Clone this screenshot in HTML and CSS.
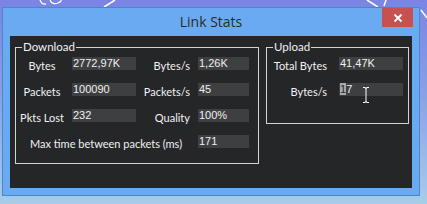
FILE: index.html
```html
<!DOCTYPE html>
<html lang="en">
<head>
    <meta charset="UTF-8">
    <title>Link Stats</title>
    <link rel="stylesheet" href="styles.css">
</head>
<body>
    <svg class="wallpaper" width="427" height="204" viewBox="0 0 427 204">
        <path d="M40 0 Q42 5 46 4 M50 0 Q52 5 58 3 Q62 1 61 0" stroke="#fff" stroke-width="1.3" fill="none"/>
        <path d="M104 7 L115 0" stroke="#fff" stroke-width="1.5"/>
        <path d="M367 0 L378 7 M386 0 L384 6" stroke="#fff" stroke-width="1.5"/>
        <path d="M421 10 L427 18" stroke="#fff" stroke-width="1.5"/>
    </svg>

    <div class="window">
        <div class="titlebar">
            <span class="title">Link Stats</span>
            <div class="close">
                <svg width="10" height="10" viewBox="0 0 10 10">
                    <path d="M1.5 1.5 L8.5 8.5 M8.5 1.5 L1.5 8.5" stroke="#fff" stroke-width="2"/>
                </svg>
            </div>
        </div>

        <div class="client">
            <div class="group download">
                <span class="legend">Download</span>
                <div class="grid">
                    <span class="lbl">Bytes</span>
                    <span class="box">2772,97K</span>
                    <span class="lbl right">Bytes/s</span>
                    <span class="box">1,26K</span>

                    <span class="lbl">Packets</span>
                    <span class="box">100090</span>
                    <span class="lbl right">Packets/s</span>
                    <span class="box">45</span>

                    <span class="lbl">Pkts Lost</span>
                    <span class="box">232</span>
                    <span class="lbl right">Quality</span>
                    <span class="box">100%</span>

                    <span class="lbl wide">Max time between packets (ms)</span>
                    <span class="box">171</span>
                </div>
            </div>

            <div class="group upload">
                <span class="legend">Upload</span>
                <div class="grid">
                    <span class="lbl right">Total Bytes</span>
                    <span class="box">41,47K</span>

                    <span class="lbl right">Bytes/s</span>
                    <span class="box editing"><span class="sel">1</span>7
                        <svg class="ibeam" width="8" height="16" viewBox="0 0 8 16">
                            <path d="M1 0.5 H3 Q4 0.5 4 2 V14 Q4 15.5 3 15.5 H1 M7 0.5 H5 Q4 0.5 4 2 M4 14 Q4 15.5 5 15.5 H7" stroke="#fff" stroke-width="1" fill="none"/>
                        </svg>
                    </span>
                </div>
            </div>
        </div>
    </div>
</body>
</html>
```

FILE: styles.css
```css
body {
    margin: 0;
    width: 427px;
    height: 204px;
    overflow: hidden;
    position: relative;
    background: linear-gradient(to bottom, #7a84e4 0%, #8a9fe6 45%, #a6cde9 100%);
    font-family: Lato, "Noto Sans", sans-serif;
}

.wallpaper {
    position: absolute;
    top: 0;
    left: 0;
}

.window {
    position: relative;
    box-sizing: border-box;
    width: 418px;
    height: 189px;
    margin: 7px 0 0 2px;
    border: 1px solid #4f86c8;
    background: #6aaaf3;
    padding: 0 7px 7px 7px;
}

.titlebar {
    height: 28px;
    display: grid;
    grid-template-columns: 1fr auto 1fr;
    align-items: start;
    margin: 0 -7px;
}

.title {
    grid-column: 2;
    font-family: "Open Sans", "Noto Sans", sans-serif;
    font-size: 14px;
    line-height: 26px;
    color: #2a2a2a;
    padding-top: 1px;
}

.close {
    grid-column: 3;
    justify-self: end;
    width: 31px;
    height: 19px;
    margin-right: 6px;
    background: #c75050;
    display: flex;
    align-items: center;
    justify-content: center;
}

.client {
    height: 152px;
    box-sizing: border-box;
    background: #252628;
    display: flex;
    align-items: flex-start;
    gap: 7px;
    padding: 11px 0 0 5px;
}

.group {
    position: relative;
    box-sizing: border-box;
    border: 1px solid #d4d4d4;
}

.legend {
    position: absolute;
    top: -8px;
    left: 6px;
    padding: 0 1px;
    background: #252628;
    color: #f2f2f2;
    font-size: 11.5px;
    line-height: 14px;
}

.grid {
    display: grid;
    grid-auto-rows: 13px;
    row-gap: 13px;
}

.download {
    width: 244px;
}

.download .grid {
    grid-template-columns: 56px 64px 62px 51px;
    padding: 9px 9px 15px 0;
}

.upload {
    width: 143px;
}

.upload .grid {
    grid-template-columns: 72px 64px;
    padding: 9px 5px 27px 0;
}

.lbl {
    color: #f2f2f2;
    font-size: 11px;
    line-height: 17px;
    white-space: nowrap;
    text-align: center;
    padding-right: 4px;
}

.lbl.right {
    text-align: right;
    padding-right: 8px;
}

.upload .lbl.right {
    padding-right: 12px;
}

.lbl.wide {
    grid-column: 1 / 4;
    text-align: left;
    padding-left: 14px;
}

.box {
    position: relative;
    background: #3e3f41;
    color: #f0f0f0;
    font-family: "Liberation Sans", Arial, sans-serif;
    font-size: 11px;
    line-height: 13px;
    padding-left: 1px;
    white-space: nowrap;
}

.sel {
    background: #a9a9a9;
    color: #3a1c2c;
}

.ibeam {
    position: absolute;
    left: 23px;
    top: 4px;
}
```
